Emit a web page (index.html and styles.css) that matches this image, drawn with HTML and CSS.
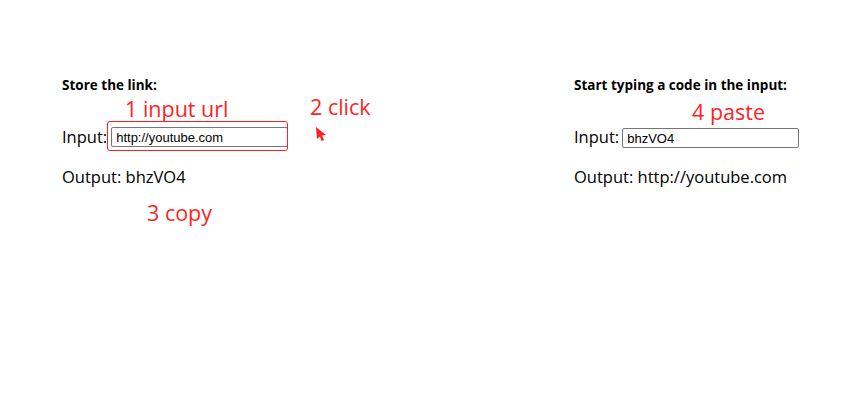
FILE: index.html
```html
<!DOCTYPE html>
<html>
<head>
<meta charset="utf-8">
<link rel="stylesheet" href="styles.css">
</head>
<body>
<div class="page">
  <section class="panel panel-left">
    <h3 class="title">Store the link:</h3>
    <div class="row">
      <span class="label">Input:</span>
      <span class="field-wrap">
        <input class="field" type="text" value="http://youtube.com">
        <span class="highlight"></span>
      </span>
    </div>
    <div class="output">Output: bhzVO4</div>
    <div class="note note-1">1 input url</div>
    <div class="note note-2">2 click</div>
    <div class="note note-3">3 copy</div>
    <svg class="cursor" width="12" height="16" viewBox="0 0 12 16"><path d="M1 1 L11 9 L7 9.5 L9 14 L6.5 15 L5 10.5 L2 13 Z" fill="#fe1f1f"></path></svg>
  </section>
  <section class="panel panel-right">
    <h3 class="title">Start typing a code in the input:</h3>
    <div class="row">
      <span class="label">Input:</span>
      <input class="field field-right" type="text" value="bhzVO4">
    </div>
    <div class="output">Output: http://youtube.com</div>
    <div class="note note-4">4 paste</div>
  </section>
</div>
</body>
</html>
```

FILE: styles.css
```css
html, body {
  margin: 0;
  padding: 0;
  background: #fff;
}
body {
  font-family: "Open Sans", "Noto Sans", sans-serif;
  color: #000;
}
.page {
  display: flex;
  padding: 77px 0 0 62px;
}
.panel {
  position: relative;
  display: flex;
  flex-direction: column;
  min-height: 160px;
}
.panel-left {
  width: 512px;
}
.title {
  margin: 0;
  font-size: 13.5px;
  font-weight: 700;
  line-height: 17px;
}
.row {
  display: flex;
  align-items: center;
  margin-top: 32px;
  height: 22px;
}
.label {
  font-size: 16.5px;
  line-height: 22px;
}
.field-wrap {
  position: relative;
  display: inline-block;
  margin-left: 4px;
  height: 20px;
}
.field {
  display: block;
  box-sizing: border-box;
  width: 177px;
  height: 20px;
  border: 1px solid #767676;
  border-radius: 2px;
  padding: 0 4px;
  margin: 0;
  font-family: "Liberation Sans", Arial, sans-serif;
  font-size: 13px;
  color: #000;
  background: #fff;
  outline: none;
}
.field-right {
  margin-left: 3px;
  margin-top: 2px;
}
.highlight {
  position: absolute;
  left: -4px;
  top: -6px;
  width: 181px;
  height: 30px;
  box-sizing: border-box;
  border: 1px solid #fe1f1f;
  border-radius: 3px;
  pointer-events: none;
}
.output {
  margin-top: 18px;
  font-size: 16.5px;
  line-height: 22px;
}
.note {
  position: absolute;
  color: #fe1f1f;
  font-size: 21.5px;
  line-height: 26px;
  white-space: nowrap;
  z-index: 2;
}
.note-1 { left: 63px; top: 19px; }
.note-2 { left: 248px; top: 17px; }
.note-3 { left: 85px; top: 123px; }
.note-4 { left: 118px; top: 22px; }
.cursor {
  position: absolute;
  left: 253px;
  top: 49px;
}
```
